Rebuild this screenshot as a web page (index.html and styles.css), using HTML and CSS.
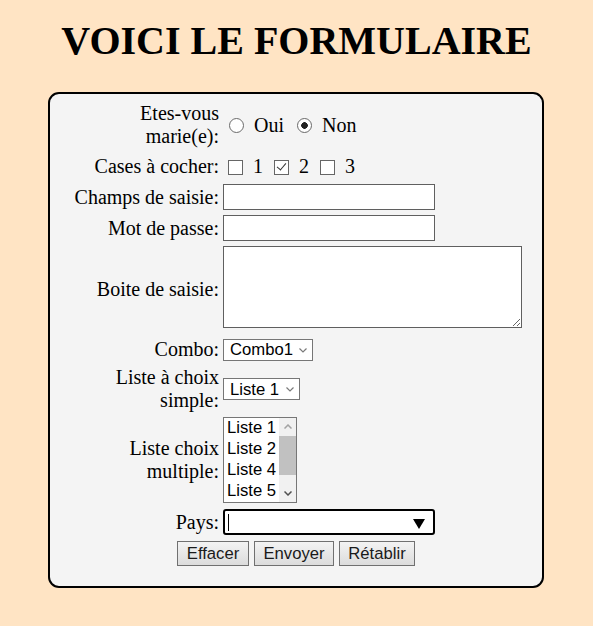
FILE: index.html
```html
<!DOCTYPE html>
<html lang="fr">
<head>
<meta charset="utf-8">
<title>Formulaire</title>
<link rel="stylesheet" href="styles.css">
</head>
<body>
<h1 class="title">VOICI LE FORMULAIRE</h1>
<form class="card">
  <div class="form-grid">
    <div class="label">Etes-vous<br>marie(e):</div>
    <div class="choices">
      <input type="radio" class="radio" name="marie" value="oui"> Oui <input type="radio" class="radio radio-2" name="marie" value="non" checked> Non
    </div>

    <div class="label">Cases à cocher:</div>
    <div class="choices">
      <input type="checkbox" class="check"> 1 <input type="checkbox" class="check" checked> 2 <input type="checkbox" class="check"> 3
    </div>

    <div class="label">Champs de saisie:</div>
    <div class="field"><input type="text" class="text-input"></div>

    <div class="label">Mot de passe:</div>
    <div class="field"><input type="password" class="text-input"></div>

    <div class="label">Boite de saisie:</div>
    <div class="field field-top"><textarea class="textarea"></textarea></div>

    <div class="label">Combo:</div>
    <div class="field">
      <div class="select-wrap">
        <select class="select select-combo">
          <option>Combo1</option>
          <option>Combo2</option>
        </select>
        <svg class="chevron" width="8" height="5" viewBox="0 0 8 5"><polyline points="0.5,0.5 4,4 7.5,0.5" fill="none" stroke="#7a7a7a" stroke-width="1.2"/></svg>
      </div>
    </div>

    <div class="label">Liste à choix<br>simple:</div>
    <div class="field">
      <div class="select-wrap">
        <select class="select select-simple">
          <option>Liste 1</option>
          <option>Liste 2</option>
        </select>
        <svg class="chevron" width="8" height="5" viewBox="0 0 8 5"><polyline points="0.5,0.5 4,4 7.5,0.5" fill="none" stroke="#7a7a7a" stroke-width="1.2"/></svg>
      </div>
    </div>

    <div class="label">Liste choix<br>multiple:</div>
    <div class="field">
      <div class="listbox-wrap">
        <select class="listbox" multiple size="4">
          <option>Liste 1</option>
          <option>Liste 2</option>
          <option>Liste 4</option>
          <option>Liste 5</option>
          <option>Liste 6</option>
          <option>Liste 7</option>
        </select>
        <div class="scrollbar">
          <div class="sb-btn">
            <svg width="8" height="5" viewBox="0 0 8 5"><polyline points="0.5,4.5 4,1 7.5,4.5" fill="none" stroke="#a3a3a3" stroke-width="1.5"/></svg>
          </div>
          <div class="sb-track">
            <div class="sb-thumb"></div>
          </div>
          <div class="sb-btn">
            <svg width="8" height="5" viewBox="0 0 8 5"><polyline points="0.5,0.5 4,4 7.5,0.5" fill="none" stroke="#505050" stroke-width="1.5"/></svg>
          </div>
        </div>
      </div>
    </div>

    <div class="label">Pays:</div>
    <div class="field">
      <div class="pays">
        <input type="text" class="pays-input" list="pays-list">
        <span class="caret"></span>
        <svg class="pays-arrow" width="12" height="10" viewBox="0 0 12 10"><polygon points="0,0 12,0 6,10" fill="#000"/></svg>
      </div>
      <datalist id="pays-list">
        <option value="France"></option>
        <option value="Belgique"></option>
        <option value="Suisse"></option>
      </datalist>
    </div>

    <div class="buttons">
      <button type="button" class="btn btn-1">Effacer</button>
      <button type="button" class="btn btn-2">Envoyer</button>
      <button type="button" class="btn btn-3">Rétablir</button>
    </div>
  </div>
</form>
</body>
</html>
```
FILE: styles.css
```css
html, body {
  margin: 0;
  padding: 0;
}

body {
  background: #ffe4c4;
  font-family: "Liberation Serif", "Times New Roman", serif;
  color: #000;
}

.title {
  margin: 18px 0 0;
  font-size: 40px;
  line-height: 46px;
  font-weight: bold;
  text-align: center;
}

.card {
  box-sizing: border-box;
  width: 496px;
  height: 496px;
  margin: 28px 0 0 48px;
  padding: 8px 0 20px;
  border: 2px solid #000;
  border-radius: 11px;
  background: #f4f4f4;
}

.form-grid {
  display: grid;
  grid-template-columns: 149px 299px;
  grid-template-rows: 46px 26px 26px 26px 87px 23px 46px 86px 28px 25px;
  column-gap: 4px;
  row-gap: 5px;
  justify-content: center;
  align-items: center;
}

.label {
  text-align: right;
  font-size: 20px;
  line-height: 23px;
}

.choices {
  font-size: 20px;
  line-height: 23px;
  white-space: nowrap;
}

.field {
  display: flex;
  align-items: center;
}

.field-top {
  align-self: start;
}

.radio {
  appearance: none;
  -webkit-appearance: none;
  box-sizing: border-box;
  width: 15px;
  height: 15px;
  margin: 0 5px 0 6px;
  border: 1.5px solid #6a6a6a;
  border-radius: 50%;
  background: #fff;
  vertical-align: -1px;
}

.radio-2 {
  margin-left: 8px;
}

.radio:checked {
  background: radial-gradient(circle, #222 0 3px, #fff 3.6px);
}

.check {
  appearance: none;
  -webkit-appearance: none;
  position: relative;
  box-sizing: border-box;
  width: 15px;
  height: 15px;
  margin: 0 5px 0 5px;
  border: 1.5px solid #666;
  border-radius: 0;
  background: #fff;
  vertical-align: -2px;
}

.check + .check {
  margin-left: 6px;
}

.check:checked::after {
  content: "";
  position: absolute;
  left: 3.5px;
  top: 0.5px;
  width: 4px;
  height: 8px;
  border: solid #333;
  border-width: 0 1.5px 1.5px 0;
  transform: rotate(40deg);
}

.text-input {
  box-sizing: border-box;
  width: 212px;
  height: 26px;
  margin: 0;
  padding: 1px 3px;
  border: 1px solid #5f5f5f;
  background: #fff;
  font: 16.67px "Liberation Sans", Arial, sans-serif;
}

.textarea {
  box-sizing: border-box;
  width: 299px;
  height: 82px;
  margin: 0;
  padding: 2px;
  border: 1px solid #5f5f5f;
  background: #fff;
  resize: both;
  font: 16.67px "Liberation Mono", monospace;
}

.select-wrap {
  position: relative;
  display: flex;
}

.select {
  appearance: none;
  -webkit-appearance: none;
  box-sizing: border-box;
  height: 22px;
  margin: 0;
  padding: 0 0 0 6px;
  border: 1px solid #767676;
  border-radius: 0;
  background-color: #fff;
  color: #000;
  font: 16.67px "Liberation Sans", Arial, sans-serif;
}

.select-combo {
  width: 90px;
}

.select-simple {
  width: 77px;
}

.chevron {
  position: absolute;
  right: 6px;
  top: 9px;
}

.listbox-wrap {
  position: relative;
  display: flex;
}

.listbox {
  box-sizing: border-box;
  width: 74px;
  height: 86px;
  margin: 0;
  padding: 0;
  border: 1px solid #767676;
  border-radius: 0;
  background: #fff;
  color: #000;
  overflow: hidden;
  scrollbar-width: none;
  font: 16.67px "Liberation Sans", Arial, sans-serif;
}

.listbox option {
  padding: 0 3px;
  line-height: 21px;
  min-height: 21px;
}

.scrollbar {
  position: absolute;
  top: 1px;
  right: 1px;
  bottom: 1px;
  width: 17px;
  display: flex;
  flex-direction: column;
  background: #f1f1f1;
}

.sb-btn {
  height: 17px;
  display: flex;
  align-items: center;
  justify-content: center;
  flex: none;
}

.sb-track {
  flex: 1;
  display: flex;
  flex-direction: column;
}

.sb-thumb {
  height: 39px;
  margin-top: 1px;
  background: #c1c1c1;
}

.pays {
  position: relative;
  width: 212px;
  height: 26px;
}

.pays-input {
  box-sizing: border-box;
  width: 212px;
  height: 26px;
  margin: 0;
  border: 2px solid #000;
  border-radius: 3px;
  background: #fff;
  caret-color: transparent;
  outline: none;
}

.caret {
  position: absolute;
  left: 5px;
  top: 5px;
  width: 1px;
  height: 17px;
  background: #000;
}

.pays-arrow {
  position: absolute;
  right: 10px;
  top: 10px;
}

.buttons {
  grid-column: 1 / -1;
  justify-self: center;
  display: flex;
  gap: 5px;
}

.btn {
  box-sizing: border-box;
  height: 25px;
  margin: 0;
  padding: 0;
  border: 1px solid #707070;
  border-radius: 0;
  background: linear-gradient(#f3f3f3, #dcdcdc);
  color: #1a1a1a;
  font: 16.67px "Liberation Sans", Arial, sans-serif;
}

.btn-1 {
  width: 72px;
}

.btn-2 {
  width: 80px;
}

.btn-3 {
  width: 76px;
}
```
